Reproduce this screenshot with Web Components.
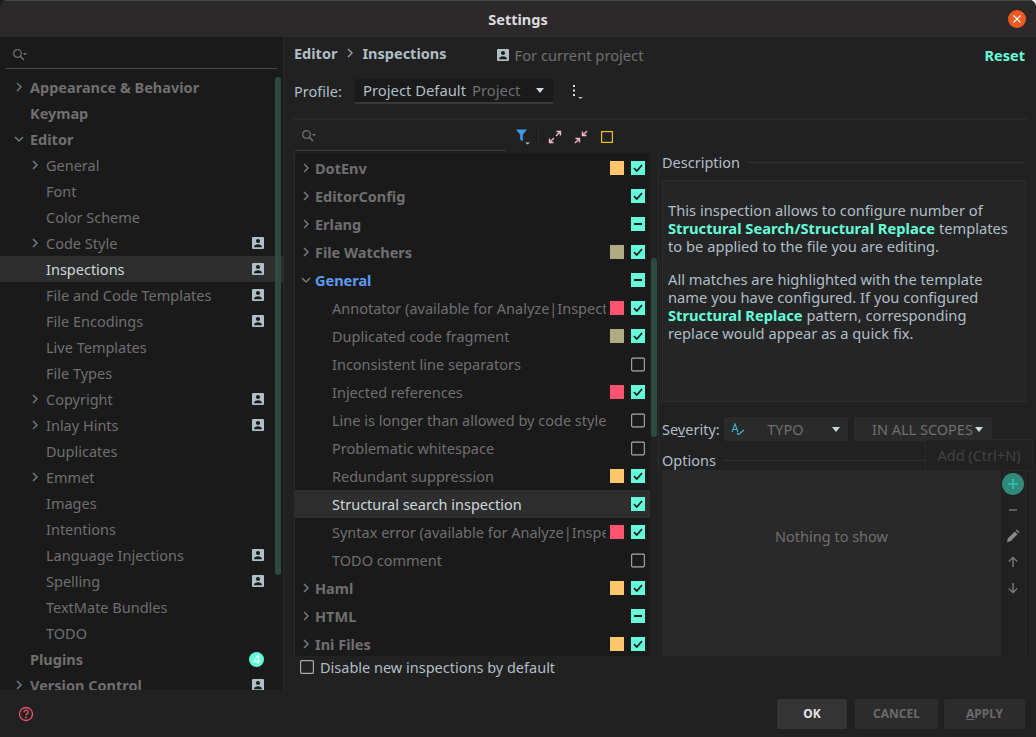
<!DOCTYPE html>
<html>
<head>
<meta charset="utf-8">
<title>Settings</title>
<style>
  html, body { margin: 0; height: 737px; overflow: hidden; background: linear-gradient(90deg, #1c1c1c 50%, #f0f0f0 50%); }
  body { font-family: "Noto Sans", "Open Sans", sans-serif; font-size: 14.5px; }
</style>
</head>
<body>
<settings-window>
  <settings-nav slot="nav">
    <nav-row depth="0" arrow="right" bold>Appearance &amp; Behavior</nav-row>
    <nav-row depth="0" bold>Keymap</nav-row>
    <nav-row depth="0" arrow="down" bold>Editor</nav-row>
    <nav-row depth="1" arrow="right">General</nav-row>
    <nav-row depth="1">Font</nav-row>
    <nav-row depth="1">Color Scheme</nav-row>
    <nav-row depth="1" arrow="right" person>Code Style</nav-row>
    <nav-row depth="1" person selected>Inspections</nav-row>
    <nav-row depth="1" person>File and Code Templates</nav-row>
    <nav-row depth="1" person>File Encodings</nav-row>
    <nav-row depth="1">Live Templates</nav-row>
    <nav-row depth="1">File Types</nav-row>
    <nav-row depth="1" arrow="right" person>Copyright</nav-row>
    <nav-row depth="1" arrow="right" person>Inlay Hints</nav-row>
    <nav-row depth="1">Duplicates</nav-row>
    <nav-row depth="1" arrow="right">Emmet</nav-row>
    <nav-row depth="1">Images</nav-row>
    <nav-row depth="1">Intentions</nav-row>
    <nav-row depth="1" person>Language Injections</nav-row>
    <nav-row depth="1" person>Spelling</nav-row>
    <nav-row depth="1">TextMate Bundles</nav-row>
    <nav-row depth="1">TODO</nav-row>
    <nav-row depth="0" bold badge="4">Plugins</nav-row>
    <nav-row depth="0" arrow="right" bold person>Version Control</nav-row>
  </settings-nav>

  <inspections-page slot="main">
    <inspection-row slot="rows" group arrow="right" swatch="#ffc66d" check="on">DotEnv</inspection-row>
    <inspection-row slot="rows" group arrow="right" check="on">EditorConfig</inspection-row>
    <inspection-row slot="rows" group arrow="right" check="mixed">Erlang</inspection-row>
    <inspection-row slot="rows" group arrow="right" swatch="#b0ac82" check="on">File Watchers</inspection-row>
    <inspection-row slot="rows" group open arrow="down" check="mixed">General</inspection-row>
    <inspection-row slot="rows" swatch="#ff5370" check="on">Annotator (available for Analyze|Inspect Code)</inspection-row>
    <inspection-row slot="rows" swatch="#b0ac82" check="on">Duplicated code fragment</inspection-row>
    <inspection-row slot="rows" check="off">Inconsistent line separators</inspection-row>
    <inspection-row slot="rows" swatch="#ff5370" check="on">Injected references</inspection-row>
    <inspection-row slot="rows" check="off">Line is longer than allowed by code style</inspection-row>
    <inspection-row slot="rows" check="off">Problematic whitespace</inspection-row>
    <inspection-row slot="rows" swatch="#ffc66d" check="on">Redundant suppression</inspection-row>
    <inspection-row slot="rows" selected check="on">Structural search inspection</inspection-row>
    <inspection-row slot="rows" swatch="#ff5370" check="on">Syntax error (available for Analyze|Inspect Code)</inspection-row>
    <inspection-row slot="rows" check="off">TODO comment</inspection-row>
    <inspection-row slot="rows" group arrow="right" swatch="#ffc66d" check="on">Haml</inspection-row>
    <inspection-row slot="rows" group arrow="right" check="mixed">HTML</inspection-row>
    <inspection-row slot="rows" group arrow="right" swatch="#ffc66d" check="on">Ini Files</inspection-row>
  </inspections-page>
</settings-window>

<script>
const PERSON = `<svg width="12" height="12" viewBox="0 0 12 12"><rect width="12" height="12" rx="1" fill="#b0bec5"/><circle cx="6" cy="4" r="2.1" fill="#1a1a1a"/><path d="M2 10.2c0-2 2-3 4-3s4 1 4 3z" fill="#1a1a1a"/></svg>`;
const chevron = (dir, color = "#6f7a7e") => dir === "down"
  ? `<svg width="10" height="10" viewBox="0 0 10 10"><path d="M1 3l4 4 4-4" fill="none" stroke="${color}" stroke-width="1.5"/></svg>`
  : `<svg width="10" height="10" viewBox="0 0 10 10"><path d="M3 1l4 4-4 4" fill="none" stroke="${color}" stroke-width="1.5"/></svg>`;
const SEARCH = `<svg width="16" height="14" viewBox="0 0 16 14"><circle cx="5.5" cy="5.5" r="3.8" fill="none" stroke="#6e6e6e" stroke-width="1.3"/><path d="M8.4 8.4l3.6 3.6" stroke="#6e6e6e" stroke-width="1.5"/><path d="M11 5h4l-2 2.2z" fill="#6e6e6e"/></svg>`;

/* window frame: title bar, sidebar, main area, footer */
const windowTemplate = document.createElement("template");
windowTemplate.innerHTML = `
  <style>
    :host { display: grid; grid-template-columns: 284px 1fr; grid-template-rows: 37px 653px 47px; width: 1036px; height: 737px; background: #212121; border-radius: 7px 7px 0 0; overflow: hidden; color: #b0bec5; }
    .title { grid-column: 1 / 3; display: flex; align-items: center; justify-content: center; background: #2b292a; border-top: 1px solid #4a4a4a; box-sizing: border-box; color: #dcdcdc; font-weight: 700; font-size: 14.5px; position: relative; }
    .close { position: absolute; right: 10px; top: 9px; width: 18px; height: 18px; border-radius: 50%; background: #f05a22; display: flex; align-items: center; justify-content: center; }
    .foot { grid-column: 1 / 3; display: flex; align-items: center; padding: 0 11px 0 18px; gap: 8px; }
    .help { margin-right: auto; display: flex; }
    .btn { height: 30px; display: flex; align-items: center; justify-content: center; border-radius: 2px; background: #2c2c2c; color: #6a6a6a; font-size: 12px; font-weight: 700; }
    .ok { width: 70px; background: #343434; color: #e4e4e4; }
    .cancel { width: 83px; }
    .apply { width: 81px; margin-left: -2px; }
    u { text-decoration-thickness: 1px; }
  </style>
  <div class="title">Settings
    <div class="close"><svg width="10" height="10" viewBox="0 0 10 10"><path d="M1.5 1.5l7 7M8.5 1.5l-7 7" stroke="#fff" stroke-width="1.2"/></svg></div>
  </div>
  <slot name="nav"></slot>
  <slot name="main"></slot>
  <div class="foot">
    <div class="help"><svg width="16" height="16" viewBox="0 0 16 16"><circle cx="8" cy="8" r="6.5" fill="none" stroke="#f0506e" stroke-width="1.3"/><path d="M5.9 6.3c0-3 4.3-2.7 4.3-.2 0 1.700-2.200 1.700-2.200 3.500" fill="none" stroke="#f0506e" stroke-width="1.3"/><circle cx="8" cy="11.500" r=".9" fill="#f0506e"/></svg></div>
    <div class="btn ok">OK</div>
    <div class="btn cancel">CANCEL</div>
    <div class="btn apply"><span><u>A</u>PPLY</span></div>
  </div>
`;
class SettingsWindow extends HTMLElement {
  constructor() {
    super();
    this.attachShadow({ mode: "open" }).appendChild(windowTemplate.content.cloneNode(true));
  }
}
customElements.define("settings-window", SettingsWindow);

/* left tree */
const navTemplate = document.createElement("template");
navTemplate.innerHTML = `
  <style>
    :host { display: flex; flex-direction: column; background: #1a1a1a; border-right: 1px solid #282828; height: 653px; overflow: hidden; position: relative; box-sizing: border-box; }
    .search { flex: none; height: 32px; margin: 0 6px; border-bottom: 1px solid #444; display: flex; align-items: center; padding: 4px 6px 0; box-sizing: border-box; }
    .rows { padding-top: 5px; }
    .thumb { position: absolute; left: 275px; top: 40px; width: 6px; height: 498px; border-radius: 3px; background: #2a4a42; }
  </style>
  <div class="search">${SEARCH}</div>
  <div class="rows"><slot></slot></div>
  <div class="thumb"></div>
`;
class SettingsNav extends HTMLElement {
  constructor() {
    super();
    this.attachShadow({ mode: "open" }).appendChild(navTemplate.content.cloneNode(true));
  }
}
customElements.define("settings-nav", SettingsNav);

class NavRow extends HTMLElement {
  constructor() {
    super();
    this.attachShadow({ mode: "open" });
  }
  connectedCallback() {
    const depth = +this.getAttribute("depth");
    const arrow = this.getAttribute("arrow");
    const badge = this.getAttribute("badge");
    this.shadowRoot.innerHTML = `
      <style>
        :host { display: flex; align-items: center; height: 26px; padding-right: 19px; color: #6f6f6f; white-space: nowrap; }
        :host([bold]) { font-weight: 700; }
        :host([selected]) { background: #2e2e2e; color: #cfd8dc; }
        .arrow { flex: none; width: 10px; height: 10px; display: flex; margin-left: ${14 + depth * 16}px; margin-right: 6px; }
        .label { flex: 1; }
        .end { display: flex; }
        .badge { width: 15px; height: 15px; border-radius: 50%; background: #64ffda; color: #fff; font-size: 12px; font-weight: 400; display: flex; align-items: center; justify-content: center; }
      </style>
      <span class="arrow">${arrow ? chevron(arrow) : ""}</span>
      <span class="label"><slot></slot></span>
      ${this.hasAttribute("person") ? `<span class="end">${PERSON}</span>` : ""}
      ${badge ? `<span class="badge">${badge}</span>` : ""}
    `;
  }
}
customElements.define("nav-row", NavRow);

/* one line of the inspection tree */
class InspectionRow extends HTMLElement {
  constructor() {
    super();
    this.attachShadow({ mode: "open" });
  }
  connectedCallback() {
    const arrow = this.getAttribute("arrow");
    const swatch = this.getAttribute("swatch");
    const check = this.getAttribute("check");
    let box = "";
    if (check === "on") box = `<svg width="14" height="14" viewBox="0 0 14 14"><rect width="14" height="14" fill="#64ffda"/><path d="M3 7.200l2.800 2.800 5.200-6" fill="none" stroke="#1a1a1a" stroke-width="1.700"/></svg>`;
    if (check === "mixed") box = `<svg width="14" height="14" viewBox="0 0 14 14"><rect width="14" height="14" fill="#64ffda"/><path d="M3 7h8" stroke="#1a1a1a" stroke-width="2"/></svg>`;
    if (check === "off") box = `<svg width="15" height="15" viewBox="0 0 15 15"><rect x=".7" y=".7" width="13.600" height="13.600" rx="1" fill="none" stroke="#a9a9a9" stroke-width="1.200"/></svg>`;
    this.shadowRoot.innerHTML = `
      <style>
        :host { display: flex; align-items: center; height: 28px; padding-right: 5px; color: #6f6f6f; white-space: nowrap; box-sizing: border-box; }
        :host([group]) { font-weight: 700; }
        :host([open]) { color: #5c9cf5; }
        :host([selected]) { background: #2e2e2e; color: #cfd8dc; }
        .arrow { flex: none; width: 10px; height: 10px; margin: 0 4px 0 6px; display: flex; }
        .label { flex: 1; overflow: hidden; min-width: 0; margin-left: ${this.hasAttribute("group") ? "0" : "17px"}; }
        .swatch { flex: none; width: 14px; height: 14px; margin: 0 7px 0 4px; background: ${swatch || "transparent"}; }
        .box { flex: none; width: 14px; height: 14px; display: flex; }
      </style>
      <span class="arrow">${arrow ? chevron(arrow) : ""}</span>
      <span class="label"><slot></slot></span>
      <span class="swatch"></span>
      <span class="box">${box}</span>
    `;
  }
}
customElements.define("inspection-row", InspectionRow);

/* titled group: caption followed by a rule */
const groupTemplate = document.createElement("template");
groupTemplate.innerHTML = `
  <style>
    :host { display: flex; align-items: center; gap: 7px; height: 18px; color: #b0bec5; }
    .rule { flex: 1; height: 1px; background: #2e2e2e; }
  </style>
  <slot></slot><div class="rule"></div>
`;
class GroupTitle extends HTMLElement {
  constructor() {
    super();
    this.attachShadow({ mode: "open" }).appendChild(groupTemplate.content.cloneNode(true));
  }
}
customElements.define("group-title", GroupTitle);

/* the page on the right */
const pageTemplate = document.createElement("template");
pageTemplate.innerHTML = `
  <style>
    :host { display: flex; flex-direction: column; height: 653px; overflow: hidden; position: relative; padding: 0 10px; box-sizing: border-box; background: #212121; color: #b0bec5; }
    .crumbs { flex: none; height: 32px; display: flex; align-items: center; font-weight: 700; color: #b0bec5; }
    .crumbs .sep { margin: 0 7px 0 8px; display: flex; }
    .scope { margin-left: 50px; display: flex; align-items: center; gap: 6px; font-weight: 400; color: #6f6f6f; margin-top: 4px; font-size: 14.7px; }
    .reset { margin-left: auto; color: #64ffda; font-weight: 700; margin-right: 1px; margin-top: 4px; }
    .profile { flex: none; height: 26px; margin-top: 9px; display: flex; align-items: center; }
    .profile > span:first-child { width: 50px; }
    .combo { margin-left: 11px; width: 198px; height: 25px; box-sizing: border-box; background: #1a1a1a; border-bottom: 2px solid #3a3a3a; display: flex; align-items: center; padding: 0 9px 0 8px; font-size: 14.8px; }
    .combo i { font-style: normal; color: #6f6f6f; margin-left: 6px; flex: 1; }
    .tri { width: 0; height: 0; border-left: 4px solid transparent; border-right: 4px solid transparent; border-top: 5px solid #cfd8dc; }
    .kebab { margin-left: 19px; display: flex; }
    .split { flex: none; height: 2px; background: #2a2a2a; margin: 14px 0 0; }
    .tools { flex: none; height: 30px; display: flex; align-items: center; margin-left: 1px; margin-top: 1px; }
    .find { width: 211px; height: 30px; border-bottom: 1px solid #3a3a3a; box-sizing: border-box; display: flex; align-items: center; padding: 0 0 0 6px; }
    .tool { display: flex; margin-top: 2px; }
    .vsep { width: 1px; height: 20px; background: #2c2c2c; margin: 2px 9px 0 7px; }
    .work { flex: 1; display: flex; min-height: 0; margin-top: 2px; margin-left: 1px; }
    .left { flex: none; width: 364px; display: flex; flex-direction: column; }
    .tree { flex: none; height: 503px; box-sizing: border-box; padding-top: 1px; overflow: hidden; position: relative; background: #1a1a1a; width: 355px; }
    .treewrap { position: relative; height: 503px; border-right: 1px solid #2a2a2a; border-left: 1px solid #2a2a2a; margin-left: -1px; }
    .thumb { position: absolute; left: 356px; top: 105px; width: 6px; height: 179px; border-radius: 3px; background: #2a4a42; }
    .disable { display: flex; align-items: center; gap: 6px; height: 22px; margin-left: 5px; }
    .cb { width: 14px; height: 14px; display: flex; }
    .right { flex: 1; display: flex; flex-direction: column; padding-left: 3px; min-width: 0; }
    .desc { height: 222px; margin-top: 9px; width: 364px; box-sizing: border-box; background: #252525; border: 1px solid #2c2c2c; padding: 20px 5px 0; line-height: 18px; font-size: 14.7px; color: #b0bec5; white-space: nowrap; }
    .desc p { margin: 0 0 15px; }
    .desc b { color: #64ffda; }
    .sev { display: flex; align-items: center; height: 24px; margin-top: 15px; }
    .sev > span:first-child { width: 59px; }
    .sel { height: 24px; background: #2a2a2a; border-radius: 2px; box-sizing: border-box; display: flex; align-items: center; color: #6f6f6f; }
    .sel1 { width: 124px; margin-left: 3px; padding: 0 8px 0 7px; }
    .sel1 span { flex: 1; text-align: center; padding-right: 6px; }
    .sel2 { width: 138px; margin-left: 6px; padding: 0 9px 0 18px; }
    .sel2 span { flex: 1; }
    .sev u { text-decoration-thickness: 1px; }
    .optcap { margin-top: 10px; }
    .opts { margin-top: 1px; height: 186px; display: flex; width: 364px; border-right: 1px solid #2c2c2c; box-sizing: border-box; }
    .none { flex: 1; background: #292929; display: flex; align-items: center; justify-content: center; color: #6f6f6f; padding-bottom: 54px; box-sizing: border-box; }
    .side { flex: none; width: 24px; display: flex; flex-direction: column; align-items: center; padding-top: 3px; gap: 6px; }
    .side span { width: 22px; height: 20px; display: flex; align-items: center; justify-content: center; }
    .plus { width: 22px !important; height: 22px !important; margin-bottom: -1px; border-radius: 50%; background: #2f8a78; }
    .tip { position: absolute; left: 641px; top: 402px; width: 108px; height: 32px; box-sizing: border-box; border: 1px solid #2a2a2a; background: #212121; color: #444; display: flex; align-items: center; justify-content: center; border-radius: 2px; opacity: .95; }
  </style>
  <div class="crumbs">
    <span>Editor</span><span class="sep">${chevron("right", "#8a9a9f")}</span><span>Inspections</span>
    <span class="scope">${PERSON}For current project</span>
    <span class="reset">Reset</span>
  </div>
  <div class="profile">
    <span>Profile:</span>
    <div class="combo">Project Default<i>Project</i><div class="tri"></div></div>
    <span class="kebab"><svg width="12" height="16" viewBox="0 0 12 16"><rect x="1" y="2" width="2" height="2" fill="#e0e0e0"/><rect x="1" y="6.500" width="2" height="2" fill="#e0e0e0"/><rect x="1" y="11" width="2" height="2" fill="#e0e0e0"/><path d="M6 14h5l-2.500 2z" fill="#b0bec5"/></svg></span>
  </div>
  <div class="split"></div>
  <div class="tools">
    <div class="find">${SEARCH}</div>
    <span class="tool" style="margin-left:9px"><svg width="16" height="18" viewBox="0 0 16 18"><path d="M1 1.500h11l-4.200 5.200v6.800l-2.600-2v-4.800z" fill="#3d9be9"/><path d="M10 14.500h5l-2.500 2z" fill="#b0bec5"/></svg></span>
    <span class="vsep"></span>
    <span class="tool"><svg width="14" height="14" viewBox="0 0 14 14"><path d="M8.500 1.500h4v4M12 2L8 6" fill="none" stroke="#f4b6c8" stroke-width="1.400"/><path d="M1.500 8.500v4h4M2 12l4-4" fill="none" stroke="#f4b6c8" stroke-width="1.400"/></svg></span>
    <span class="tool" style="margin-left:12px"><svg width="14" height="14" viewBox="0 0 14 14"><path d="M8.500 1.500v4h4M13 1L9 5" fill="none" stroke="#f4b6c8" stroke-width="1.400"/><path d="M1.500 8.500h4v4M1 13l4-4" fill="none" stroke="#f4b6c8" stroke-width="1.400"/></svg></span>
    <span class="tool" style="margin-left:13px"><svg width="12" height="12" viewBox="0 0 12 12"><rect x=".6" y=".6" width="10.800" height="10.800" fill="none" stroke="#f2c200" stroke-width="1.200"/></svg></span>
  </div>
  <div class="work">
    <div class="left">
      <div class="treewrap">
        <div class="tree"><slot name="rows"></slot></div>
        <div class="thumb"></div>
      </div>
      <label class="disable"><span class="cb"><svg width="14" height="14" viewBox="0 0 14 14"><rect x=".6" y=".6" width="12.800" height="12.800" rx="1" fill="none" stroke="#a9a9a9" stroke-width="1.200"/></svg></span>Disable new inspections by default</label>
    </div>
    <div class="right">
      <group-title>Description</group-title>
      <div class="desc">
        <p>This inspection allows to configure number of<br><b>Structural Search/Structural Replace</b> templates<br>to be applied to the file you are editing.</p>
        <p>All matches are highlighted with the template<br>name you have configured. If you configured<br><b>Structural Replace</b> pattern, corresponding<br>replace would appear as a quick fix.</p>
      </div>
      <div class="sev">
        <span>Se<u>v</u>erity:</span>
        <div class="sel sel1"><svg width="14" height="14" viewBox="0 0 14 14"><path d="M1 10L4 2l3 8M2 7.500h4" fill="none" stroke="#3db9d3" stroke-width="1.100"/><path d="M6 11l1.500 1.500L13 8" fill="none" stroke="#3db9d3" stroke-width="1.100"/></svg><span>TYPO</span><div class="tri"></div></div>
        <div class="sel sel2"><span>IN ALL SCOPES</span><div class="tri"></div></div>
      </div>
      <group-title class="optcap">Options</group-title>
      <div class="opts">
        <div class="none">Nothing to show</div>
        <div class="side">
          <span class="plus"><svg width="12" height="12" viewBox="0 0 12 12"><path d="M6 1v10M1 6h10" stroke="#2ec4b6" stroke-width="1.600"/></svg></span>
          <span><svg width="12" height="12" viewBox="0 0 12 12"><path d="M2 6h8" stroke="#6a6a6a" stroke-width="1.600"/></svg></span>
          <span><svg width="14" height="14" viewBox="0 0 14 14"><path d="M1 13l.8-3.500 7-7 2.700 2.700-7 7zM9.800 1.500l1-1 2.700 2.700-1 1z" fill="#8a8a8a"/></svg></span>
          <span><svg width="12" height="12" viewBox="0 0 12 12"><path d="M6 11V1.500M1.800 5.500L6 1.500l4.200 4" fill="none" stroke="#7a7a7a" stroke-width="1.400"/></svg></span>
          <span><svg width="12" height="12" viewBox="0 0 12 12"><path d="M6 1v9.500M1.800 6.500L6 10.500l4.200-4" fill="none" stroke="#7a7a7a" stroke-width="1.400"/></svg></span>
        </div>
      </div>
    </div>
  </div>
  <div class="tip">Add (Ctrl+N)</div>
`;
class InspectionsPage extends HTMLElement {
  constructor() {
    super();
    this.attachShadow({ mode: "open" }).appendChild(pageTemplate.content.cloneNode(true));
  }
}
customElements.define("inspections-page", InspectionsPage);
</script>
</body>
</html>
